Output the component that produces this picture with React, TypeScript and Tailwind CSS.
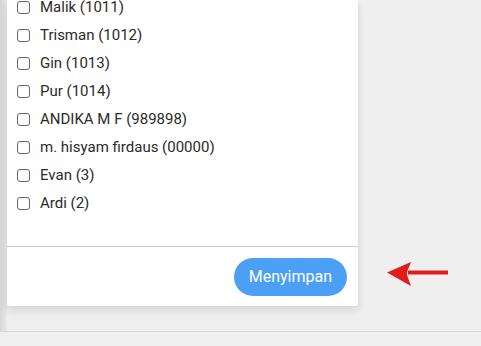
import React from 'react';

const people = [
  'Malik (1011)',
  'Trisman (1012)',
  'Gin (1013)',
  'Pur (1014)',
  'ANDIKA M F (989898)',
  'm. hisyam firdaus (00000)',
  'Evan (3)',
  'Ardi (2)',
];

export default function App() {
  return (
    <div
      className="relative w-[481px] h-[346px] overflow-hidden bg-[#efefef] flex flex-col"
      style={{ fontFamily: 'Roboto, "Liberation Sans", sans-serif' }}
    >
      <div className="flex h-[331px]">
        <div className="w-[7px] h-full bg-gradient-to-r from-[#d6d6d6] to-[#e9e9e9]" />
        <div className="self-start w-[351px] bg-white rounded-b-[3px] shadow-[0_4px_10px_rgba(0,0,0,0.12)]">
          <ul className="mt-[-7px] pl-[10px]">
            {people.map((p) => (
              <li key={p} className="h-[28.1px] flex items-center gap-[10px]">
                <input
                  type="checkbox"
                  className="appearance-none w-[13px] h-[13px] border border-[#666] rounded-[3px] bg-white"
                />
                <span className="text-[15px] text-[#2b2b2b]">{p}</span>
              </li>
            ))}
          </ul>
          <div className="h-[28px]" />
          <div className="border-t border-[#cfcfcf] flex justify-end pt-[11px] pb-[10px] pr-[11px]">
            <button className="h-[38px] px-[15px] rounded-full bg-[#4ba0f5] text-white text-[16px]">
              Menyimpan
            </button>
          </div>
        </div>
      </div>
      <div className="flex-1 border-t border-[#d6d6de] bg-[#f0f0f0]" />
      <svg
        className="absolute left-[386px] top-[261px]"
        width="64"
        height="26"
        viewBox="0 0 64 26"
      >
        <polygon points="1,11.5 25,1 21,11 21,14 25,25" fill="#e31b1b" />
        <rect x="22" y="9.5" width="40" height="4" fill="#e31b1b" />
      </svg>
    </div>
  );
}
